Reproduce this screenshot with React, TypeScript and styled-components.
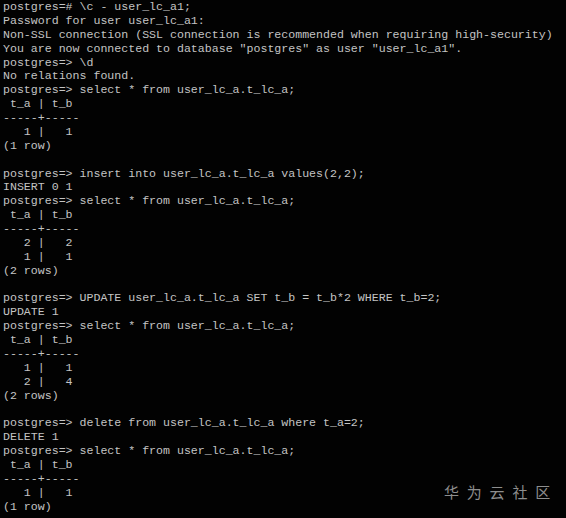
import React from "react";
import styled, { createGlobalStyle } from "styled-components";

const Global = createGlobalStyle`
  html, body { margin: 0; padding: 0; background: #000; }
  #root { width: 566px; height: 518px; }
`;

const Terminal = styled.div`
  position: relative;
  width: 566px;
  height: 518px;
  background: #020202;
  overflow: hidden;
  padding: 0 0 0 3px;
  box-sizing: border-box;
  display: flex;
  flex-direction: column;
  align-items: flex-start;
`;

const Line = styled.div`
  font-family: "Liberation Mono", "Courier New", monospace;
  font-size: 11.6px;
  line-height: 13.89px;
  height: 13.89px;
  color: #c4c4c4;
  white-space: pre;
  width: fit-content;
`;

const Watermark = styled.div`
  position: absolute;
  left: 444px;
  top: 483px;
  font-family: "Noto Sans CJK SC", "Noto Sans", sans-serif;
  font-size: 15px;
  line-height: 18px;
  letter-spacing: 7.8px;
  color: #8e8e8e;
`;

const lines = [
  "postgres=# \\c - user_lc_a1;",
  "Password for user user_lc_a1:",
  "Non-SSL connection (SSL connection is recommended when requiring high-security)",
  'You are now connected to database "postgres" as user "user_lc_a1".',
  "postgres=> \\d",
  "No relations found.",
  "postgres=> select * from user_lc_a.t_lc_a;",
  " t_a | t_b",
  "-----+-----",
  "   1 |   1",
  "(1 row)",
  "",
  "postgres=> insert into user_lc_a.t_lc_a values(2,2);",
  "INSERT 0 1",
  "postgres=> select * from user_lc_a.t_lc_a;",
  " t_a | t_b",
  "-----+-----",
  "   2 |   2",
  "   1 |   1",
  "(2 rows)",
  "",
  "postgres=> UPDATE user_lc_a.t_lc_a SET t_b = t_b*2 WHERE t_b=2;",
  "UPDATE 1",
  "postgres=> select * from user_lc_a.t_lc_a;",
  " t_a | t_b",
  "-----+-----",
  "   1 |   1",
  "   2 |   4",
  "(2 rows)",
  "",
  "postgres=> delete from user_lc_a.t_lc_a where t_a=2;",
  "DELETE 1",
  "postgres=> select * from user_lc_a.t_lc_a;",
  " t_a | t_b",
  "-----+-----",
  "   1 |   1",
  "(1 row)",
];

export default function App() {
  return (
    <>
      <Global />
      <Terminal>
        {lines.map((l, i) => (
          <Line key={i}>{l}</Line>
        ))}
        <Watermark>华为云社区</Watermark>
      </Terminal>
    </>
  );
}
